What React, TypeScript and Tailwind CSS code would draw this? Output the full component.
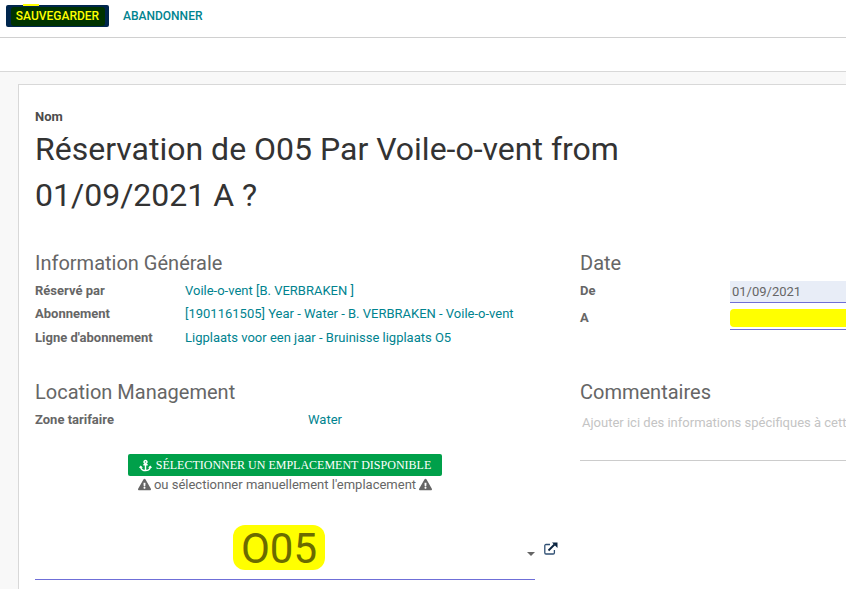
import { FaAnchor, FaExclamationTriangle } from "react-icons/fa";

function Row({ label, value }: { label: string; value: string }) {
  return (
    <div className="flex h-[23.5px] items-center text-[13px]">
      <div className="w-[150px] shrink-0 font-bold text-[#666666]">{label}</div>
      <div className="text-[#00838f] whitespace-nowrap">{value}</div>
    </div>
  );
}

export default function App() {
  return (
    <div className="h-[589px] w-[846px] overflow-hidden bg-white font-['Roboto',sans-serif] text-[#4c4c4c]">
      <div className="flex h-[38px] items-start gap-[14px] border-b border-[#d0d0d0] pl-[6px] pt-[5px]">
        <div className="relative flex h-[22px] w-[103px] items-center justify-center rounded-[2px] bg-[#00264d]">
          <span className="absolute left-[17px] top-[-1px] h-[2px] w-[16px] bg-[#ffff00]" />
          <span className="flex h-[19px] w-[94px] items-center justify-center rounded-[3px] bg-[#003300] text-[12px] font-medium text-[#ffff00]">SAUVEGARDER</span>
        </div>
        <div className="flex h-[22px] items-center text-[12px] font-medium text-[#00838f]">ABANDONNER</div>
      </div>
      <div className="h-[34px] border-b border-[#d8d8d8]" />
      <div className="h-[517px] bg-[#f8f8f8] pl-[18px] pt-[12px]">
        <div className="h-[520px] w-[900px] border border-[#d8d8d8] bg-white pl-[16px] pt-[25px]">
          <div className="text-[13px] font-bold leading-[14px] text-[#4c4c4c]">Nom</div>
          <h1 className="mt-[2px] w-[600px] text-[32px] font-normal leading-[46px] text-[#333333]">
            Réservation de O05 Par Voile-o-vent from 01/09/2021 A ?
          </h1>
          <div className="mt-[32px] flex">
            <div className="w-[500px] shrink-0">
              <h2 className="text-[20px] font-normal leading-[26px] text-[#666666]">Information Générale</h2>
              <div className="mt-[2.5px]">
                <Row label="Réservé par" value="Voile-o-vent [B. VERBRAKEN ]" />
                <Row label="Abonnement" value="[1901161505] Year - Water - B. VERBRAKEN - Voile-o-vent" />
                <Row label="Ligne d'abonnement" value="Ligplaats voor een jaar - Bruinisse ligplaats O5" />
              </div>
              <h2 className="mt-[30px] text-[20px] font-normal leading-[26px] text-[#666666]">Location Management</h2>
              <div className="mt-[3px] flex h-[23px] items-center text-[13px]">
                <div className="w-[273px] shrink-0 font-bold text-[#666666]">Zone tarifaire</div>
                <div className="text-[#00838f]">Water</div>
              </div>
              <div className="mt-[23px] flex flex-col items-center">
                <div className="flex h-[22px] w-[314px] items-center justify-center gap-[4px] rounded-[2px] bg-[#00a04a] font-['Liberation_Serif',serif] text-[12px] text-white whitespace-nowrap">
                  <FaAnchor className="h-[13px] w-[13px]" />
                  <span>SÉLECTIONNER UN EMPLACEMENT DISPONIBLE</span>
                </div>
                <div className="flex h-[17px] items-center gap-[3px] text-[13px] text-[#666666]">
                  <FaExclamationTriangle className="h-[13px] w-[13px]" />
                  <span>ou sélectionner manuellement l'emplacement</span>
                  <FaExclamationTriangle className="h-[13px] w-[13px]" />
                </div>
              </div>
              <div className="relative mt-[21px] flex h-[66px] items-center justify-center border-b border-[#6f6fd8] pt-[2px]">
                <span className="mr-[12px] rounded-[12px] bg-[#ffff00] px-[8px] pt-[3px] text-[42px] leading-[42px] text-[#6b6b00]">O05</span>
                <span className="absolute right-[0px] top-[38px] h-0 w-0 border-x-[4px] border-t-[4px] border-x-transparent border-t-[#666666]" />
                <svg viewBox="0 0 14 13" className="absolute right-[-23px] top-[28px] h-[13px] w-[14px]" fill="none">
                  <path d="M6 2.5H2a1.2 1.2 0 0 0-1.2 1.2v7.1A1.2 1.2 0 0 0 2 12h7.2a1.2 1.2 0 0 0 1.2-1.2V8" stroke="#2f4f73" strokeWidth="1.3" />
                  <path d="M4.5 8.5 10.5 2.5" stroke="#0b2440" strokeWidth="1.8" />
                  <path d="M8 0.5h5.5V6Z" fill="#0b2440" />
                </svg>
              </div>
            </div>
            <div className="ml-[45px] flex-1">
              <h2 className="text-[20px] font-normal leading-[26px] text-[#666666]">Date</h2>
              <div className="mt-[3px] flex h-[23.5px] items-center text-[13px]">
                <div className="w-[150px] shrink-0 font-bold text-[#666666]">De</div>
                <div className="mt-[3px] flex h-[22px] w-[200px] items-center border-b border-[#6f6fd8] bg-[#e8edf7] pl-[2px] text-[#666666]">01/09/2021</div>
              </div>
              <div className="mt-[3.5px] flex h-[23.5px] items-center text-[13px]">
                <div className="w-[150px] shrink-0 font-bold text-[#666666]">A</div>
                <div className="mt-[3px] flex h-[22px] w-[200px] items-start border-b border-[#6f6fd8] pt-[1px]">
                  <div className="h-[18px] w-full rounded-[4px] bg-[#ffff00]" />
                </div>
              </div>
              <h2 className="mt-[49px] text-[20px] font-normal leading-[26px] text-[#666666]">Commentaires</h2>
              <div className="mt-[3px] h-[53px] w-[300px] overflow-hidden border-b border-[#cccccc] pl-[2px] pt-[5px] text-[13px] whitespace-nowrap text-[#c4c4c4]">
                Ajouter ici des informations spécifiques à cett
              </div>
            </div>
          </div>
        </div>
      </div>
    </div>
  );
}
